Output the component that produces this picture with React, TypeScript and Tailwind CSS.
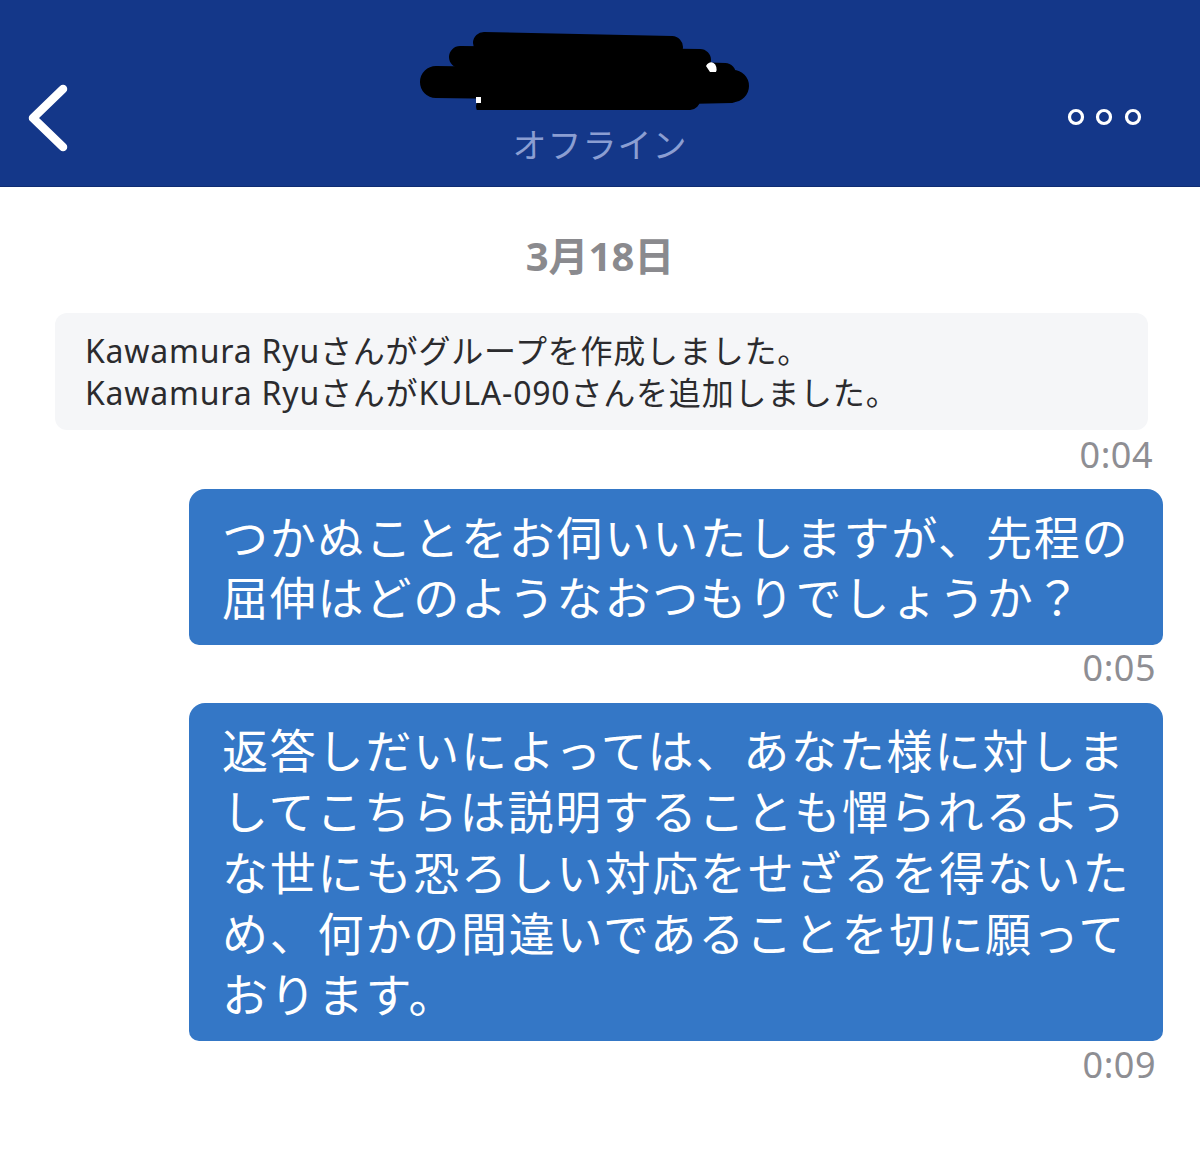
import React from 'react';

const jp = { fontFamily: '"Noto Sans", "Noto Sans CJK JP", sans-serif' };

const Timestamp: React.FC<{ time: string; className: string }> = ({ time, className }) => (
    <div className={`flex justify-end text-[36px] leading-[38px] tracking-[0.5px] text-[#8e8e93] ${className}`}>
        {time}
    </div>
);

const Bubble: React.FC<{ lines: string[]; className?: string }> = ({ lines, className = '' }) => (
    <div className={`ml-[189px] mr-[37px] rounded-t-[16px] rounded-b-[10px] bg-[#3477c6] pl-[33px] pr-[20px] text-white text-[46px] tracking-[1.8px] ${className}`}>
        {lines.map((line, i) => (
            <React.Fragment key={i}>
                <span className="whitespace-nowrap">{line}</span>
                {i < lines.length - 1 && <br />}
            </React.Fragment>
        ))}
    </div>
);

const Header: React.FC = () => (
    <header className="flex h-[187px] bg-[#143789] border-b border-[#0f2c72]">
        <div className="w-[200px]">
            <svg width="80" height="186" viewBox="0 0 80 186">
                <polyline points="63,89 33,118 63,147" fill="none" stroke="#fff" strokeWidth="8.5" strokeLinecap="round" strokeLinejoin="round" />
            </svg>
        </div>
        <div className="flex-1 flex flex-col items-center">
            {/* redacted name */}
            <svg width="360" height="110" viewBox="420 0 360 110">
                <g stroke="#000" strokeLinecap="round" fill="none">
                    <line x1="484" y1="43" x2="672" y2="47" strokeWidth="22" />
                    <line x1="460" y1="57" x2="700" y2="60" strokeWidth="22" />
                    <line x1="436" y1="82" x2="733" y2="86" strokeWidth="32" />
                    <line x1="600" y1="70" x2="725" y2="74" strokeWidth="22" />
                    <line x1="486" y1="106" x2="690" y2="100" strokeWidth="20" />
                    <line x1="640" y1="98" x2="732" y2="96" strokeWidth="14" />
                </g>
                <path d="M706 66 a5 6 0 0 1 10 6 l-6 0 z" fill="#fff" />
                <rect x="476" y="97" width="5" height="6" fill="#fff" />
            </svg>
            <div className="mt-[15px] text-[34px] leading-[40px] tracking-[1px] text-[#8b9ed2]" style={jp}>
                オフライン
            </div>
        </div>
        <div className="w-[200px]">
            <svg width="200" height="186" viewBox="1000 0 200 186">
                <g fill="none" stroke="#fff" strokeWidth="3.2">
                    <circle cx="1076" cy="117" r="6.5" />
                    <circle cx="1104" cy="117" r="6.5" />
                    <circle cx="1133" cy="117" r="6.5" />
                </g>
            </svg>
        </div>
    </header>
);

export default function App() {
    return (
        <div className="w-[1200px] h-[1151px] bg-white overflow-hidden" style={jp}>
            <Header />

            <div className="mt-[49px] text-center text-[40px] leading-[40px] font-bold text-[#8a8a8e]">
                3月18日
            </div>

            <div className="mt-[37px] ml-[55px] mr-[52px] rounded-[12px] bg-[#f5f6f8] pl-[30px] pt-[17px] pb-[16px] text-[32px] leading-[42px] tracking-[0.8px] text-[#2b2b2e]">
                <div>Kawamura Ryuさんがグループを作成しました。</div>
                <div>Kawamura RyuさんがKULA-090さんを追加しました。</div>
            </div>

            <Timestamp time="0:04" className="mt-[6px] mr-[47px]" />

            <Bubble
                className="mt-[15px] py-[18px] leading-[60px]"
                lines={['つかぬことをお伺いいたしますが、先程の', '屈伸はどのようなおつもりでしょうか？']}
            />

            <Timestamp time="0:05" className="mt-[4px] mr-[44px]" />

            <Bubble
                className="mt-[16px] pt-[17px] pb-[16px] leading-[61px]"
                lines={[
                    '返答しだいによっては、あなた様に対しま',
                    'してこちらは説明することも憚られるよう',
                    'な世にも恐ろしい対応をせざるを得ないた',
                    'め、何かの間違いであることを切に願って',
                    'おります。',
                ]}
            />

            <Timestamp time="0:09" className="mt-[5px] mr-[44px]" />
        </div>
    );
}
